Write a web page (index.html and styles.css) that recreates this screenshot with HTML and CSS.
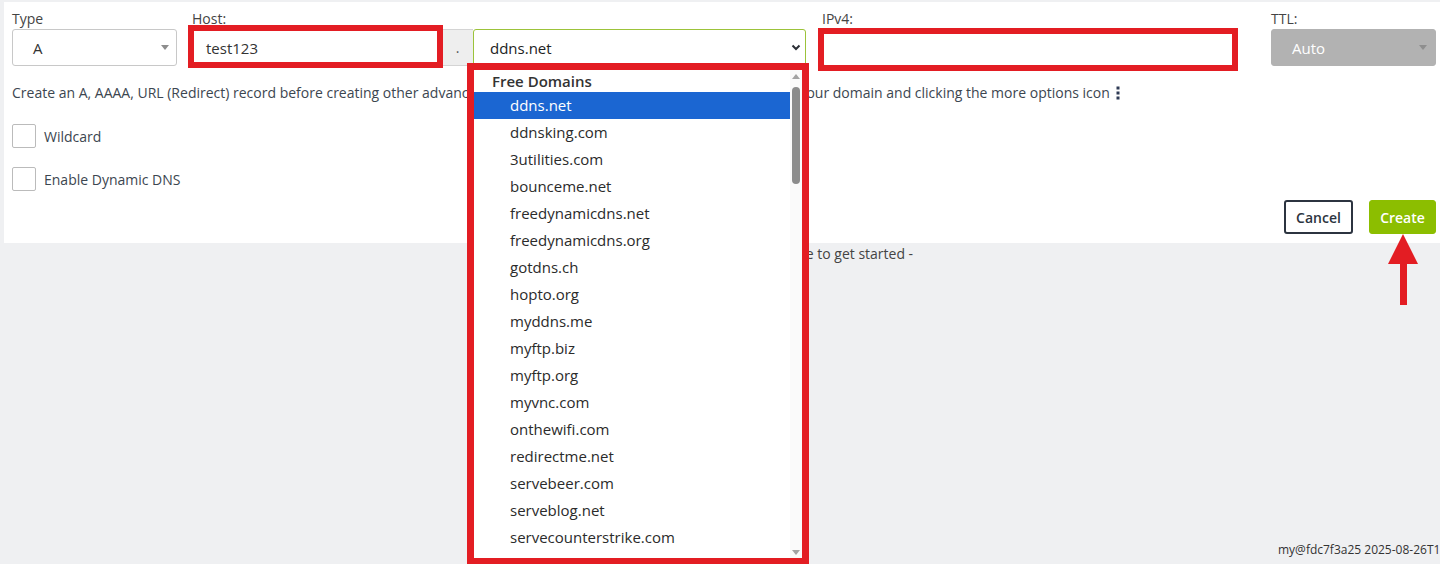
FILE: index.html
```html
<!DOCTYPE html>
<html lang="en">
<head>
  <meta charset="UTF-8">
  <title>Create Hostname</title>
  <link rel="stylesheet" href="styles.css">
</head>
<body>

  <!-- Create record form -->
  <div class="panel">
    <div class="fields">
      <div class="field f-type">
        <label>Type</label>
        <div class="select">A<span class="caret"></span></div>
      </div>

      <div class="field f-host">
        <label>Host:</label>
        <div class="host-row">
          <div class="input host-input marked">test123</div>
          <span class="addon">.</span>
          <div class="domain">
            <div class="select domain-select">ddns.net
              <svg class="chevron" width="10" height="7" viewBox="0 0 10 7"><polyline points="1.5,1.5 5,5 8.5,1.5" fill="none" stroke="#2b2f36" stroke-width="2"/></svg>
            </div>

            <!-- open domain list -->
            <div class="dropdown">
              <div class="list">
                <div class="group">Free Domains</div>
                <div class="opt selected">ddns.net</div>
                <div class="opt">ddnsking.com</div>
                <div class="opt">3utilities.com</div>
                <div class="opt">bounceme.net</div>
                <div class="opt">freedynamicdns.net</div>
                <div class="opt">freedynamicdns.org</div>
                <div class="opt">gotdns.ch</div>
                <div class="opt">hopto.org</div>
                <div class="opt">myddns.me</div>
                <div class="opt">myftp.biz</div>
                <div class="opt">myftp.org</div>
                <div class="opt">myvnc.com</div>
                <div class="opt">onthewifi.com</div>
                <div class="opt">redirectme.net</div>
                <div class="opt">servebeer.com</div>
                <div class="opt">serveblog.net</div>
                <div class="opt">servecounterstrike.com</div>
                <div class="opt">serveftp.com</div>
              </div>
              <div class="scrollbar">
                <span class="sb-btn"><span class="tri-up"></span></span>
                <span class="thumb"></span>
                <span class="sb-btn"><span class="tri-down"></span></span>
              </div>
            </div>
          </div>
        </div>
      </div>

      <div class="field f-ip">
        <label>IPv4:</label>
        <div class="input ip-input marked"></div>
      </div>

      <div class="field f-ttl">
        <label>TTL:</label>
        <div class="select ttl-select">Auto<span class="caret"></span></div>
      </div>
    </div>

    <p class="help">Create an A, AAAA, URL (Redirect) record before creating other advanced records such as CNAME, MX or TXT by selecting your domain and clicking the more options icon
      <svg class="kebab" width="4" height="14" viewBox="0 0 4 14"><rect x="0.5" y="0.5" width="3" height="3"/><rect x="0.5" y="5.5" width="3" height="3"/><rect x="0.5" y="10.5" width="3" height="3"/></svg>
    </p>

    <div class="check"><span class="box"></span>Wildcard</div>
    <div class="check"><span class="box"></span>Enable Dynamic DNS</div>

    <div class="actions">
      <button class="btn btn-cancel">Cancel</button>
      <button class="btn btn-create">Create
        <svg class="arrow" width="32" height="72" viewBox="0 0 32 72"><polygon points="16,0 31,30 1,30" fill="#e31d23"/><rect x="13" y="29" width="7" height="42" fill="#e31d23"/></svg>
      </button>
    </div>
  </div>

  <p class="empty">- You have no hostnames. Create one above to get started -</p>

  <div class="footer">
    <span class="build">my@fdc7f3a25 2025-08-26T14:12:07Z</span>
  </div>

</body>
</html>
```

FILE: styles.css
```css
body {
  margin: 0;
  min-height: 564px;
  display: flex;
  flex-direction: column;
  background: #eff0f2;
  font-family: "Open Sans", Arial, sans-serif;
  color: #3c4650;
  overflow: hidden;
}

.panel {
  margin: 2px 0 0 4px;
  padding: 7px 4px 9px 8px;
  background: #fff;
}

.fields {
  display: flex;
  align-items: flex-start;
}

.field label {
  display: block;
  font-size: 14px;
  line-height: 19px;
  margin-bottom: 1px;
  color: #444;
}

.f-type { width: 165px; }
.f-host { margin-left: 15px; }
.f-ip { margin-left: 16px; width: 413px; }
.f-ttl { margin-left: 36px; width: 165px; }

.select, .input {
  box-sizing: border-box;
  height: 37px;
  border: 1px solid #c8c8c8;
  border-radius: 3px;
  font-size: 15px;
  color: #333;
  display: flex;
  align-items: center;
  padding-left: 20px;
  background: #fff;
}

.caret {
  margin-left: auto;
  margin-right: 7px;
  border-left: 4px solid transparent;
  border-right: 4px solid transparent;
  border-top: 5px solid #8d8d8d;
}

.host-row {
  display: flex;
}

.host-input {
  width: 250px;
  padding-left: 13px;
  border-radius: 3px 0 0 3px;
}

.addon {
  box-sizing: border-box;
  width: 31px;
  height: 37px;
  background: #eee;
  border: 1px solid #d4d4d4;
  border-left: none;
  border-right: none;
  display: flex;
  align-items: center;
  justify-content: center;
  font-size: 14px;
  color: #555;
}

.domain {
  position: relative;
  width: 333px;
}

.domain-select {
  border-color: #9cc33a;
  padding-left: 16px;
  color: #222;
}

.chevron {
  margin-left: auto;
  margin-right: 4px;
}

.ip-input {
  width: 413px;
}

.ttl-select {
  background: #b2b2b2;
  border-color: #b2b2b2;
  color: #fff;
}

.ttl-select .caret {
  border-top-color: #8e8e8e;
  margin-right: 8px;
}

/* red annotation frames */
.marked {
  position: relative;
}

.marked::after {
  content: "";
  position: absolute;
  border: 6px solid #e31d23;
}

.host-input::after { top: -5px; bottom: -3px; left: -5px; right: -2px; }
.ip-input::after { top: -2px; bottom: -6px; left: -5px; right: -4px; }

/* open select list */
.dropdown {
  position: absolute;
  top: 34px;
  left: -6px;
  width: 342px;
  height: 502px;
  box-sizing: border-box;
  border: 7px solid #e31d23;
  background: #fff;
  display: flex;
  z-index: 5;
}

.list {
  flex: 1;
  overflow: hidden;
  font-size: 15px;
  color: #2b2b2b;
}

.group {
  height: 22px;
  line-height: 22px;
  padding-left: 18px;
  font-weight: 600;
  color: #333;
}

.opt {
  height: 27px;
  line-height: 27px;
  padding-left: 36px;
}

.opt.selected {
  background: #1b66d2;
  color: #fff;
}

.scrollbar {
  width: 12px;
  display: flex;
  flex-direction: column;
  align-items: center;
  background: #fafafa;
}

.sb-btn {
  height: 12px;
  display: flex;
  align-items: center;
  justify-content: center;
}

.sb-btn:last-child {
  margin-top: auto;
}

.tri-up, .tri-down {
  border-left: 4px solid transparent;
  border-right: 4px solid transparent;
}

.tri-up { border-bottom: 5px solid #a3a3a3; }
.tri-down { border-top: 5px solid #a3a3a3; }

.thumb {
  margin-top: 5px;
  width: 8px;
  height: 97px;
  border-radius: 4px;
  background: #8c8c8c;
}

.help {
  margin: 17px 0 0;
  font-size: 14px;
  line-height: 20px;
  color: #3c4650;
}

.kebab {
  fill: #2f3b55;
  vertical-align: -2px;
  margin-left: 3px;
}

.check {
  display: flex;
  align-items: center;
  font-size: 14px;
  height: 24px;
  margin-top: 21px;
}

.check + .check {
  margin-top: 19px;
}

.box {
  box-sizing: border-box;
  width: 24px;
  height: 24px;
  border: 1px solid #bbb;
  border-radius: 2px;
  margin-right: 8px;
}

.actions {
  display: flex;
  justify-content: flex-end;
  gap: 16px;
  margin-top: 9px;
}

.btn {
  height: 34px;
  font-family: "Open Sans", Arial, sans-serif;
  font-size: 14px;
  font-weight: 600;
  border-radius: 3px;
  cursor: pointer;
}

.btn-cancel {
  width: 69px;
  background: #fff;
  border: 2px solid #2c3440;
  color: #2c3440;
}

.btn-create {
  position: relative;
  width: 67px;
  background: #8cbe00;
  border: 1px solid #8cbe00;
  color: #fff;
}

.arrow {
  position: absolute;
  top: 100%;
  left: 50%;
  margin-left: -16px;
  margin-top: 1px;
}

.empty {
  margin: 1px 0 0;
  text-align: center;
  font-size: 14px;
  line-height: 20px;
  color: #444;
}

.footer {
  margin-top: auto;
  display: flex;
  justify-content: flex-end;
  padding-bottom: 5px;
}

.build {
  width: 162px;
  white-space: nowrap;
  font-size: 12px;
  line-height: 18px;
  color: #333;
}
```
